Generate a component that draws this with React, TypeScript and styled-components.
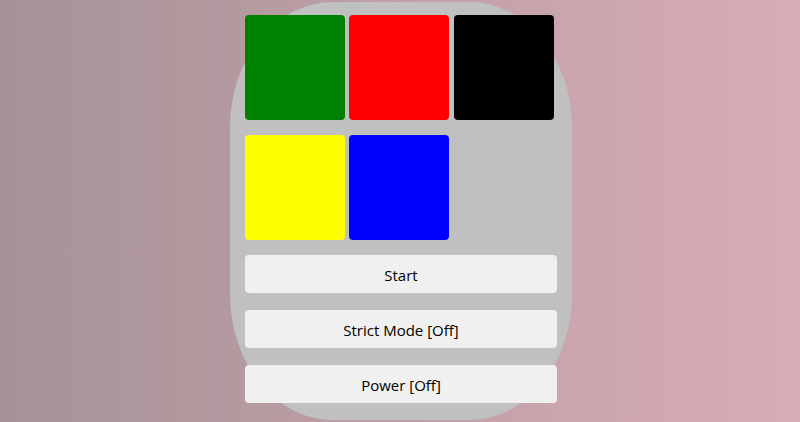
import styled, { createGlobalStyle } from 'styled-components';

const GlobalStyle = createGlobalStyle`
  html, body {
    margin: 0;
    padding: 0;
    height: 100%;
  }
  body {
    background: linear-gradient(to right, #a59297, #d9adb5);
    font-family: "Open Sans", "Noto Sans", sans-serif;
  }
`;

const COLORS = ['green', 'red', 'black', 'yellow', 'blue'];

const Page = styled.div`
  width: 800px;
  height: 422px;
  display: flex;
  justify-content: center;
  padding-top: 2px;
  box-sizing: border-box;
`;

const Board = styled.div`
  width: 342px;
  height: 418px;
  box-sizing: border-box;
  padding: 13px 15px 17px;
  background: #c0c0c0;
  border-radius: 30%;
  display: flex;
  flex-direction: column;
  margin-left: 2px;
`;

const Pads = styled.div`
  display: flex;
  flex-wrap: wrap;
  column-gap: 4.4px;
  row-gap: 15px;
  width: 309px;
  margin-bottom: 15px;
`;

const Pad = styled.div<{ $color: string }>`
  width: 100px;
  height: 105px;
  border-radius: 4px;
  background: ${(p) => p.$color};
`;

const Controls = styled.div`
  display: flex;
  flex-direction: column;
  gap: 17px;
`;

const Button = styled.button`
  height: 38px;
  width: 100%;
  border: none;
  border-radius: 4px;
  background: #f0f0f0;
  color: #000;
  font-family: "Open Sans", "Noto Sans", sans-serif;
  font-size: 15px;
  padding: 2px 0 0;
  cursor: pointer;
`;

export default function App() {
  return (
    <>
      <GlobalStyle />
      <Page>
        <Board>
          <Pads>
            {COLORS.map((c) => (
              <Pad key={c} $color={c} />
            ))}
          </Pads>
          <Controls>
            <Button>Start</Button>
            <Button>Strict Mode [Off]</Button>
            <Button>Power [Off]</Button>
          </Controls>
        </Board>
      </Page>
    </>
  );
}
